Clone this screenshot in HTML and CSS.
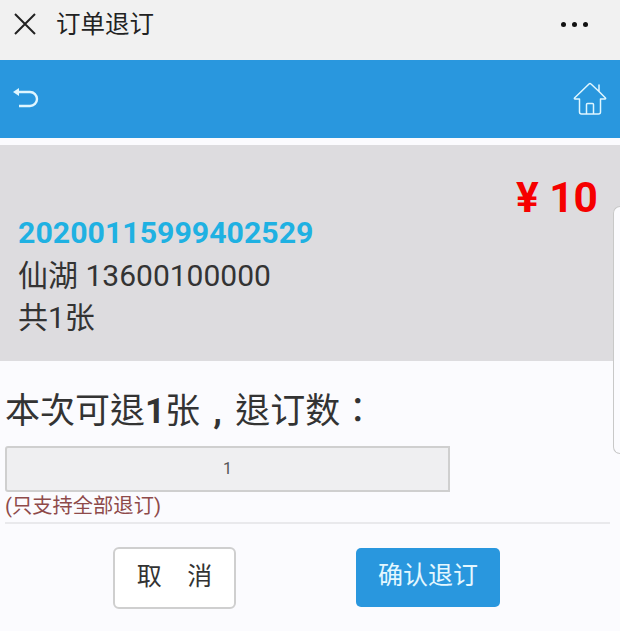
FILE: index.html
```html
<!DOCTYPE html>
<html lang="zh">
<head>
<meta charset="utf-8">
<title>订单退订</title>
<link rel="stylesheet" href="styles.css">
</head>
<body>
<header class="wx-bar">
  <svg class="wx-close" width="24" height="24" viewBox="0 0 24 24"><path d="M2 2 L22 22 M22 2 L2 22" fill="none" stroke="#222" stroke-width="2"/></svg>
  <span class="wx-title">订单退订</span>
  <span class="wx-more"><i></i><i></i><i></i></span>
</header>
<nav class="nav">
  <svg width="28" height="26" viewBox="0 0 28 26"><path d="M6 6 H19 a6.500 6.500 0 0 1 0 14 H8" fill="none" stroke="#dff6ff" stroke-width="2.400"/><path d="M2 6 L8 2 V10 Z" fill="#dff6ff"/></svg>
  <svg width="34" height="34" viewBox="0 0 34 34"><path d="M1.500 16 Q1 17 2 17 H6.500 V30 Q6.500 32 8.500 32 H25.500 Q27.500 32 27.500 30 V17 H32 Q33 17 32.500 16 L26 9.500 V3 M26 9.500 L18 2 Q17 1 16 2 L1.500 16 M13.500 32 V22.500 Q13.500 21.500 14.500 21.500 H19.500 Q20.500 21.500 20.500 22.500 V32" fill="none" stroke="#dff6ff" stroke-width="1.500" stroke-linejoin="round" stroke-linecap="round"/></svg>
</nav>
<section class="order">
  <div class="price">¥ 10</div>
  <div class="order-no">20200115999402529</div>
  <div class="order-line">仙湖 13600100000</div>
  <div class="order-line">共1张</div>
</section>
<main class="form">
  <h2 class="prompt" lang="zh-TW">本次可退<b>1</b>张<span class="comma">,</span>退订数：</h2>
  <div class="qty">1</div>
  <p class="note">(只支持全部退订)</p>
  <div class="actions">
    <button class="btn btn-cancel">取&emsp;消</button>
    <button class="btn btn-ok">确认退订</button>
  </div>
</main>
<div class="side-tab"></div>
</body>
</html>
```

FILE: styles.css
```css
* { box-sizing: border-box; }
html, body { margin: 0; height: 631px; overflow: hidden; }
body { width: 620px; background: #fbfbfe; position: relative; font-family: "Roboto", "Noto Sans CJK SC", sans-serif; color: #333; }
.wx-bar { height: 60px; background: #f1f1f1; display: flex; align-items: center; padding: 0 32px 12px 13px; }
.wx-title { font-size: 24.500px; line-height: 30px; color: #222; margin-left: 19px; margin-top: 1px; flex: 1; }
.wx-more { display: flex; gap: 6px; margin-top: 1px; }
.wx-more i { width: 5px; height: 5px; border-radius: 50%; background: #111; }
.nav { height: 78px; background: #2997de; display: flex; align-items: center; justify-content: space-between; padding: 0 13px 0 11px; }
.order { margin-top: 7px; height: 216px; background: #dddcdf; padding: 28px 22px 0 18px; }
.price { text-align: right; color: #f60000; font-weight: 700; font-size: 42.500px; line-height: 50px; }
.order-no { color: #1fb1e2; font-weight: 700; font-size: 30.300px; line-height: 36px; margin-top: -8px; }
.order-line { font-size: 30px; line-height: 42px; color: #333; margin-top: 4px; }
.order-line + .order-line { margin-top: 0; }
.form { padding: 28px 0 0 5px; }
.prompt { margin: 0; height: 46px; font-family: "Roboto", "Noto Sans CJK TC", sans-serif; font-weight: 400; font-size: 35px; line-height: 46px; color: #333; }
.prompt b { font-weight: 700; }
.comma { display: inline-block; width: 35px; text-align: center; font-weight: 700; }
.qty { width: 445px; height: 46px; margin-top: 11px; background: #efeff1; border: 2px solid #cfcfcf; border-radius: 3px 0 0 3px; text-align: center; line-height: 42px; font-size: 16px; color: #555; }
.note { margin: 0 10px 0 0; height: 32px; font-size: 20.300px; line-height: 28px; color: #8e4a4a; border-bottom: 2px solid #e9e9ec; }
.actions { display: flex; padding: 23px 0 0 108px; gap: 120px; align-items: flex-start; }
.btn { font-family: inherit; font-size: 25px; padding: 0; line-height: 30px; }
.btn-cancel { width: 123px; height: 62px; background: #fff; border: 2px solid #cfcfcf; border-radius: 6px; color: #333; padding-bottom: 3px; }
.btn-ok { width: 144px; height: 59px; margin-top: 1px; background: #2997de; border: 0; border-radius: 5px; color: #e4f7ff; padding-bottom: 3px; }
.side-tab { position: absolute; right: 0; top: 206px; width: 7px; height: 248px; background: #fbfbfe; border: 1px solid #c8c8c8; border-right: 0; border-radius: 8px 0 0 8px; }
```
